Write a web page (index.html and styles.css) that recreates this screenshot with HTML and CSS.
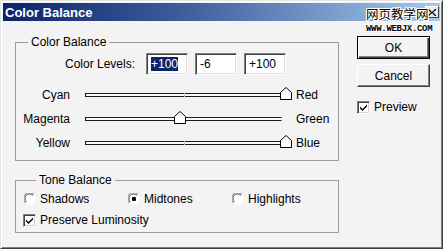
FILE: index.html
```html
<!DOCTYPE html>
<html>
<head>
<meta charset="utf-8">
<link rel="stylesheet" href="styles.css">
</head>
<body>
<div class="window">
  <div class="titlebar">
    <span class="title">Color Balance</span>
    <span class="close"><svg width="8" height="7" viewBox="0 0 8 7"><path d="M0 0L1 0L4 3L7 0L8 0L8 1L5 3.5L8 6L8 7L7 7L4 4L1 7L0 7L0 6L3 3.5L0 1Z" fill="#000"/></svg></span>
  </div>
  <div class="watermark">
    <div class="wm-cn">网页教学网</div>
    <div class="wm-url">WWW.WEBJX.COM</div>
  </div>
  <div class="body">
    <div class="left">
      <fieldset class="group g1">
        <legend>Color Balance</legend>
        <div class="levels">
          <span class="levels-label">Color Levels:</span>
          <div class="field"><span class="sel">+100</span></div>
          <div class="field">-6</div>
          <div class="field">+100</div>
        </div>
        <div class="sliders">
          <span class="sl-left">Cyan</span>
          <div class="track-cell"><div class="track"><span class="tick"></span><svg class="thumb" style="left: 194px" width="12" height="13" viewBox="0 0 12 13"><path d="M6 0.5L11.5 5.5L11.5 12.5L0.5 12.5L0.5 5.5Z" fill="#fff" stroke="#000"/></svg></div></div>
          <span class="sl-right">Red</span>
          <span class="sl-left">Magenta</span>
          <div class="track-cell"><div class="track"><span class="tick"></span><svg class="thumb" style="left: 88px" width="12" height="13" viewBox="0 0 12 13"><path d="M6 0.5L11.5 5.5L11.5 12.5L0.5 12.5L0.5 5.5Z" fill="#fff" stroke="#000"/></svg></div></div>
          <span class="sl-right">Green</span>
          <span class="sl-left">Yellow</span>
          <div class="track-cell"><div class="track"><span class="tick"></span><svg class="thumb" style="left: 194px" width="12" height="13" viewBox="0 0 12 13"><path d="M6 0.5L11.5 5.5L11.5 12.5L0.5 12.5L0.5 5.5Z" fill="#fff" stroke="#000"/></svg></div></div>
          <span class="sl-right">Blue</span>
        </div>
      </fieldset>
      <fieldset class="group g2">
        <legend>Tone Balance</legend>
        <div class="radios">
          <span class="opt"><svg class="radio" width="12" height="12" viewBox="0 0 12 12"><circle cx="6" cy="6" r="5.5" fill="#fff"/><path d="M1.2 10A5.5 5.5 0 0 1 10 1.2" fill="none" stroke="#808080" stroke-width="1"/><path d="M2.3 9A4.3 4.3 0 0 1 9 2.3" fill="none" stroke="#404040" stroke-width="1"/></svg>Shadows</span>
          <span class="opt"><svg class="radio" width="12" height="12" viewBox="0 0 12 12"><circle cx="6" cy="6" r="5.5" fill="#fff"/><path d="M1.2 10A5.5 5.5 0 0 1 10 1.2" fill="none" stroke="#808080" stroke-width="1"/><path d="M2.3 9A4.3 4.3 0 0 1 9 2.3" fill="none" stroke="#404040" stroke-width="1"/><rect x="4" y="4" width="4" height="4" rx="1" fill="#000"/></svg>Midtones</span>
          <span class="opt"><svg class="radio" width="12" height="12" viewBox="0 0 12 12"><circle cx="6" cy="6" r="5.5" fill="#fff"/><path d="M1.2 10A5.5 5.5 0 0 1 10 1.2" fill="none" stroke="#808080" stroke-width="1"/><path d="M2.3 9A4.3 4.3 0 0 1 9 2.3" fill="none" stroke="#404040" stroke-width="1"/></svg>Highlights</span>
        </div>
        <div class="opt lum"><span class="checkbox"><svg width="9" height="9" viewBox="0 0 9 9"><path d="M1 3.5L3.5 6L8 1.5L8 3.5L3.5 8L1 5.5Z" fill="#000"/></svg></span>Preserve Luminosity</div>
      </fieldset>
    </div>
    <div class="right">
      <button class="btn btn-default">OK</button>
      <button class="btn">Cancel</button>
      <div class="opt preview"><span class="checkbox"><svg width="9" height="9" viewBox="0 0 9 9"><path d="M1 3.5L3.5 6L8 1.5L8 3.5L3.5 8L1 5.5Z" fill="#000"/></svg></span>Preview</div>
    </div>
  </div>
</div>
</body>
</html>
```

FILE: styles.css
```css
* { box-sizing: border-box; }
html, body { margin: 0; padding: 0; }
body {
  width: 443px;
  height: 249px;
  overflow: hidden;
  background: #f3f3f3;
  font-family: "Liberation Sans", Arial, sans-serif;
  font-size: 12px;
  color: #000;
}
.window {
  position: relative;
  width: 443px;
  height: 249px;
  background: #f3f3f3;
  border-style: solid;
  border-width: 1px;
  border-color: #e4e4e4 #404040 #404040 #e4e4e4;
  box-shadow: inset 1px 1px #ffffff, inset -1px -1px #808080;
  padding: 2px;
}
.titlebar {
  height: 18px;
  background: linear-gradient(to right, #0a246a 0%, #3a5c9a 40%, #a6caf0 100%);
  display: flex;
  align-items: center;
  justify-content: space-between;
  padding: 0 1px 0 2px;
}
.title {
  color: #fff;
  font-weight: bold;
  font-size: 13px;
}
.close {
  width: 14px;
  height: 12px;
  background: #e8e8e8;
  border: 1px solid;
  border-color: #fff #404040 #404040 #fff;
  display: flex;
  align-items: center;
  justify-content: center;
}
.watermark {
  position: absolute;
  left: 362px;
  top: 6px;
  display: flex;
  flex-direction: column;
  align-items: flex-start;
}
.wm-cn {
  font-family: "Noto Sans CJK SC", sans-serif;
  font-size: 12.5px;
  line-height: 14px;
  color: #000;
  padding-left: 3px;
  text-shadow: 1px 0 #fff, -1px 0 #fff, 0 1px #fff, 0 -1px #fff, 1px 1px #fff, -1px -1px #fff, 1px -1px #fff, -1px 1px #fff;
}
.wm-url {
  font-family: "Liberation Mono", monospace;
  font-weight: bold;
  font-size: 9px;
  line-height: 9px;
  margin-top: 4px;
  padding-left: 3px;
  letter-spacing: -0.3px;
  color: #000;
  text-shadow: 1px 0 #fff, -1px 0 #fff, 0 1px #fff, 0 -1px #fff;
}
.body {
  display: flex;
  padding: 14px 0 0 12px;
}
.left {
  width: 324px;
  display: flex;
  flex-direction: column;
}
.group {
  margin: 0;
  border: 1px solid #9c9c9c;
  min-width: 0;
}
.group legend {
  padding: 0 3px;
  margin-left: 12px;
  line-height: 14px;
  height: 14px;
}
.g1 {
  padding: 4px 0 5px 0;
}
.levels {
  display: flex;
  align-items: center;
  height: 22px;
}
.levels-label {
  width: 119px;
  text-align: right;
  margin-right: 11px;
}
.field {
  width: 42px;
  height: 22px;
  background: #fff;
  border: 1px solid;
  border-color: #808080 #fff #fff #808080;
  box-shadow: inset 1px 1px #404040, inset -1px -1px #e0e0e0;
  padding: 0 0 0 4px;
  display: flex;
  align-items: center;
  margin-right: 7px;
}
.sel {
  background: #0a246a;
  color: #fff;
  line-height: 14px;
}
.sliders {
  display: grid;
  grid-template-columns: 54px 226px auto;
  grid-auto-rows: 24px;
  align-items: center;
  margin-top: 8px;
}
.sl-left { text-align: right; }
.track-cell {
  padding: 0 14px 0 15px;
}
.track {
  position: relative;
  height: 4px;
  border: 1px solid #1a1a1a;
  border-right-color: #e0e0e0;
  background: #fafafa;
}
.tick {
  position: absolute;
  left: 98px;
  top: -1px;
  width: 1px;
  height: 4px;
  background: #bdbdbd;
}
.thumb {
  position: absolute;
  top: -7px;
  display: block;
}
.g2 {
  margin-top: 12px;
  padding: 5px 0 5px 8px;
}
.radios {
  display: grid;
  grid-template-columns: 104px 104px auto;
  height: 14px;
  align-items: center;
}
.opt {
  display: flex;
  align-items: center;
  line-height: 14px;
}
.radio {
  margin-right: 4px;
  flex: none;
}
.lum {
  margin-top: 7px;
}
.checkbox {
  width: 13px;
  height: 13px;
  flex: none;
  background: #fff;
  border: 1px solid;
  border-color: #808080 #fff #fff #808080;
  box-shadow: inset 1px 1px #404040, inset -1px -1px #d4d0c8;
  display: flex;
  align-items: center;
  justify-content: center;
  margin-right: 4px;
}
.lum .checkbox { margin-left: -1px; }
.right {
  margin-left: 18px;
  padding-top: 1px;
  display: flex;
  flex-direction: column;
}
.btn {
  width: 73px;
  height: 23px;
  font-family: "Liberation Sans", Arial, sans-serif;
  font-size: 12px;
  color: #000;
  background: #f3f3f3;
  border: 1px solid;
  border-color: #fff #404040 #404040 #fff;
  box-shadow: inset -1px -1px #808080;
  padding: 0;
  margin: 0 0 5px 0;
}
.btn-default {
  border: 1px solid #000;
  box-shadow: inset 1px 1px #fff, inset -1px -1px #404040, inset -2px -2px #808080;
}
.preview {
  margin-top: 8px;
}
```
